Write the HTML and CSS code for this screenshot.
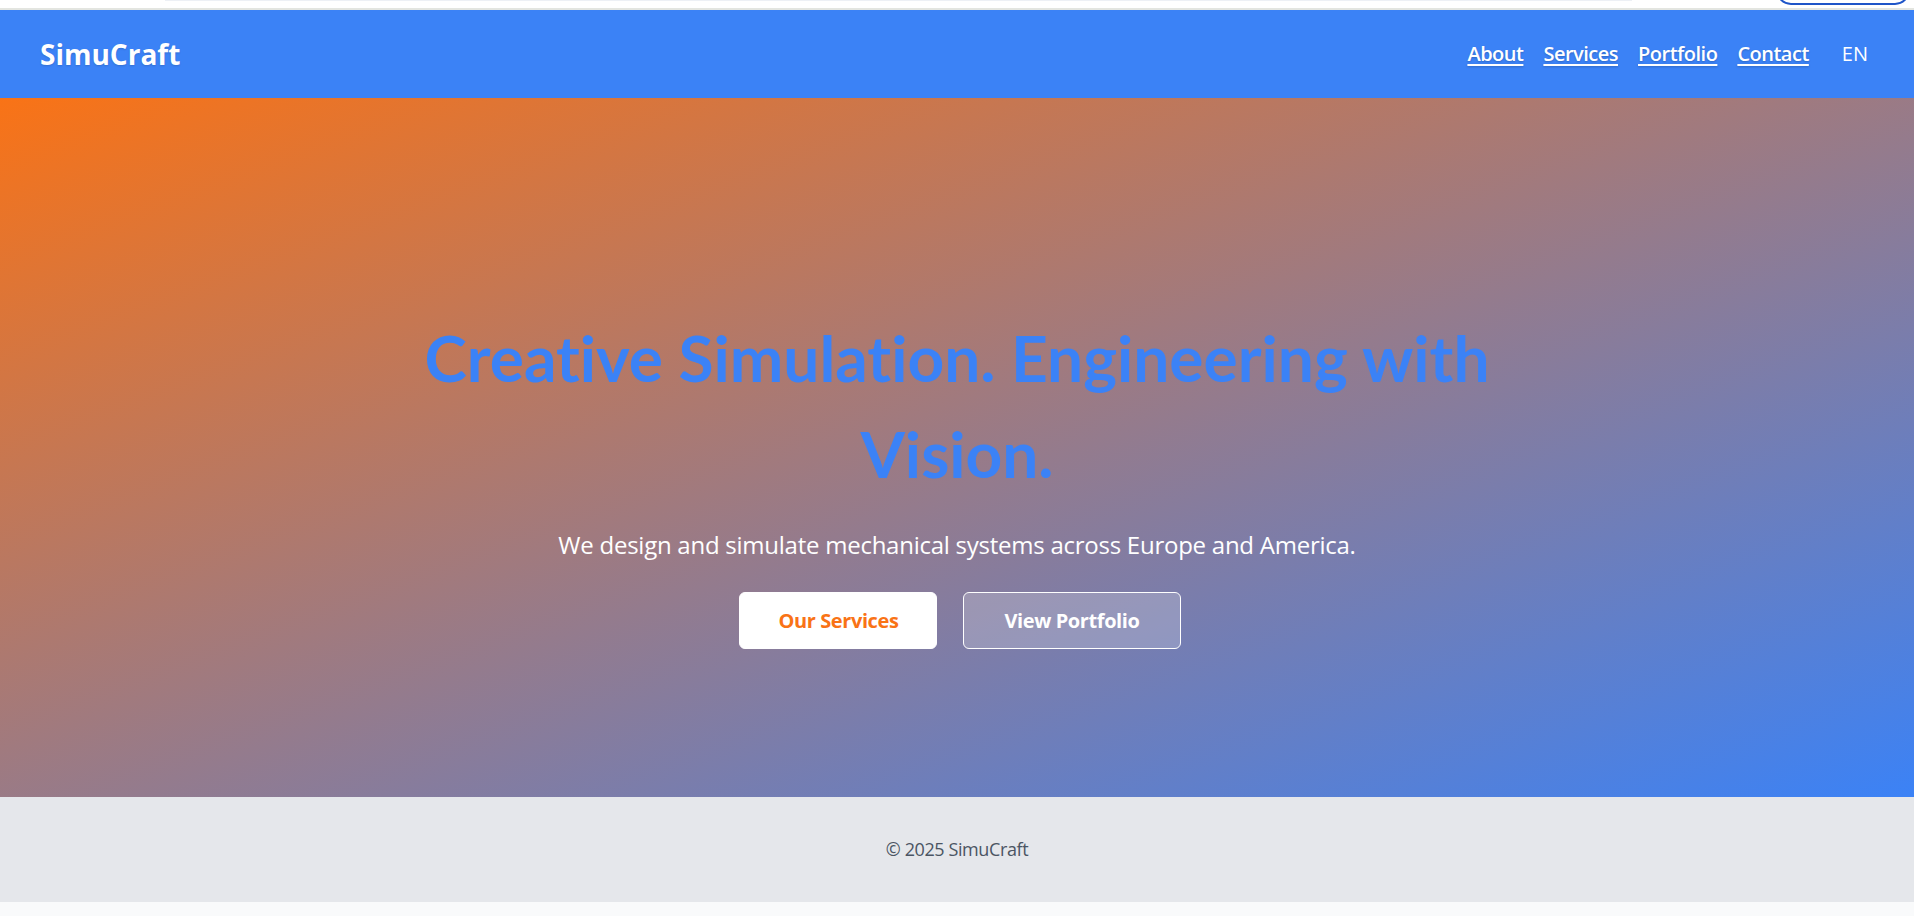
FILE: index.html
```html
<!DOCTYPE html>
<html lang="en">
<head>
<meta charset="utf-8">
<title>SimuCraft</title>
<link rel="stylesheet" href="styles.css">
</head>
<body>
<div class="topstrip">
  <div class="topstrip-bar"></div>
  <div class="topstrip-pill"></div>
</div>
<header class="site-header">
  <a class="logo" href="#">SimuCraft</a>
  <nav class="nav">
    <a class="nav-link" href="#about">About</a>
    <a class="nav-link" href="#services">Services</a>
    <a class="nav-link" href="#portfolio">Portfolio</a>
    <a class="nav-link" href="#contact">Contact</a>
    <span class="lang">EN</span>
  </nav>
</header>
<main class="hero">
  <h1 class="hero-title">Creative Simulation. Engineering with Vision.</h1>
  <p class="hero-sub">We design and simulate mechanical systems across Europe and America.</p>
  <div class="hero-actions">
    <a class="btn btn-primary" href="#services">Our Services</a>
    <a class="btn btn-ghost" href="#portfolio">View Portfolio</a>
  </div>
</main>
<footer class="site-footer">© 2025 SimuCraft</footer>
</body>
</html>
```

FILE: styles.css
```css
* { box-sizing: border-box; }
html, body { margin: 0; padding: 0; }
body {
  background: #f9fafb;
  font-family: "Open Sans", "Noto Sans", "Liberation Sans", sans-serif;
  color: #111827;
}
.topstrip {
  height: 10px;
  background: #ffffff;
  border-bottom: 2px solid #e3e5e0;
  display: flex;
  align-items: flex-start;
  overflow: hidden;
}
.topstrip-bar {
  margin-left: 165px;
  width: 1467px;
  height: 1px;
  background: #edf0f5;
}
.topstrip-pill {
  margin-left: auto;
  margin-right: 4px;
  margin-top: -25px;
  width: 134px;
  height: 30px;
  border: 2px solid #1f55c8;
  border-radius: 16px;
}
.site-header {
  height: 88px;
  background: #3b82f6;
  display: flex;
  align-items: center;
  justify-content: space-between;
  padding: 0 40px;
}
.logo {
  color: #ffffff;
  font-weight: 700;
  font-size: 28px;
  text-decoration: none;
  text-shadow: 0 1px 2px rgba(0,0,0,0.15);
}
.nav {
  display: flex;
  align-items: center;
  gap: 20px;
  margin-top: -2px;
}
.nav-link {
  color: #ffffff;
  font-size: 20px;
  font-weight: 600;
  text-decoration: underline;
  text-underline-offset: 3px;
  text-shadow: 0 1px 2px rgba(0,0,0,0.2);
  letter-spacing: -0.5px;
}
.lang {
  color: #ffffff;
  font-size: 20px;
  padding: 0 6px;
  margin-left: 7px;
}
.hero {
  height: 699px;
  padding-top: 212px;
  background: linear-gradient(to bottom right, #f97316, #3b82f6);
  text-align: center;
}
.hero-title {
  margin: 0 auto;
  max-width: 1120px;
  font-family: "Lato", "Open Sans", sans-serif;
  font-variant-ligatures: none;
  font-size: 64px;
  line-height: 96px;
  font-weight: 700;
  color: #3b82f6;
}
.hero-sub {
  margin: 25px 0 0;
  font-size: 24px;
  line-height: 36px;
  color: #ffffff;
  letter-spacing: -0.25px;
}
.hero-actions {
  margin-top: 29px;
  padding-left: 6px;
  display: flex;
  justify-content: center;
  gap: 26px;
}
.btn {
  display: inline-block;
  padding: 14px 40px;
  font-size: 20px;
  line-height: 27px;
  font-weight: 700;
  border-radius: 6px;
  text-decoration: none;
  border: 1px solid #ffffff;
  letter-spacing: -0.4px;
}
.btn-primary {
  padding: 14px 38px;
  background: #ffffff;
  color: #f97316;
}
.btn-ghost {
  background: rgba(255,255,255,0.2);
  color: #ffffff;
}
.site-footer {
  height: 105px;
  background: #e5e7eb;
  color: #4b5563;
  font-size: 18px;
  line-height: 27px;
  padding: 39px 0;
  text-align: center;
  letter-spacing: -0.4px;
}
```
